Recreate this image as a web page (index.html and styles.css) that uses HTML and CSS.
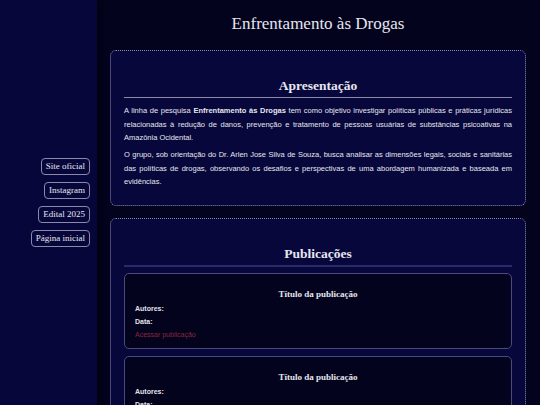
FILE: index.html
```html
<!DOCTYPE html>
<html lang="pt-BR">
<head>
<meta charset="utf-8">
<title>Enfrentamento às Drogas</title>
<link rel="stylesheet" href="styles.css">
</head>
<body>
<div class="layout">
  <nav class="sidebar">
    <a class="nav-btn" href="#">Site oficial</a>
    <a class="nav-btn" href="#">Instagram</a>
    <a class="nav-btn" href="#">Edital 2025</a>
    <a class="nav-btn" href="#">Página inicial</a>
  </nav>
  <main class="main">
    <h1 class="page-title">Enfrentamento às Drogas</h1>
    <section class="card">
      <h2 class="card-title">Apresentação</h2>
      <p class="text">A linha de pesquisa <strong>Enfrentamento às Drogas</strong> tem como objetivo investigar políticas públicas e práticas jurídicas relacionadas à redução de danos, prevenção e tratamento de pessoas usuárias de substâncias psicoativas na Amazônia Ocidental.</p>
      <p class="text">O grupo, sob orientação do Dr. Arlen Jose Silva de Souza, busca analisar as dimensões legais, sociais e sanitárias das políticas de drogas, observando os desafios e perspectivas de uma abordagem humanizada e baseada em evidências.</p>
    </section>
    <section class="card">
      <h2 class="card-title card-title-alt">Publicações</h2>
      <div class="pub">
        <h3 class="pub-title">Título da publicação</h3>
        <p class="pub-line">Autores:</p>
        <p class="pub-line">Data:</p>
        <a class="pub-link" href="#">Acessar publicação</a>
      </div>
      <div class="pub">
        <h3 class="pub-title">Título da publicação</h3>
        <p class="pub-line">Autores:</p>
        <p class="pub-line">Data:</p>
        <a class="pub-link" href="#">Acessar publicação</a>
      </div>
    </section>
  </main>
</div>
</body>
</html>
```
FILE: styles.css
```css
* { box-sizing: border-box; }
html, body { margin: 0; padding: 0; }
body {
  background: #03031e;
  color: #e2e2ea;
  font-family: "Liberation Serif", "Times New Roman", serif;
  height: 405px;
  overflow: hidden;
}
.layout {
  display: flex;
  height: 405px;
}
.sidebar {
  width: 97px;
  flex: none;
  background: #06063a;
  box-shadow: 2px 0 4px rgba(0, 0, 0, 0.55);
  display: flex;
  flex-direction: column;
  justify-content: center;
  align-items: flex-end;
  gap: 7px;
  padding: 0 7px 0 0;
  position: relative;
  z-index: 1;
}
.nav-btn {
  font-family: "Liberation Serif", serif;
  font-size: 9px;
  line-height: 15px;
  color: #e6e6ee;
  text-decoration: none;
  border: 1px solid #8a8aa8;
  border-radius: 4px;
  padding: 0 4px;
  height: 17px;
}
.main {
  flex: 1;
  padding: 0 14px 0 13px;
  overflow: hidden;
}
.page-title {
  font-weight: normal;
  font-size: 17px;
  text-align: center;
  margin: 14px 0 16px;
  line-height: 20px;
  color: #e6e6ee;
}
.card {
  background: #07073c;
  border: 1px dotted #8a8ab0;
  border-radius: 6px;
  padding: 26px 13px 13px;
  margin-bottom: 12px;
}
.card-title {
  font-size: 13.5px;
  text-align: center;
  margin: 0 0 6px;
  padding-bottom: 2px;
  line-height: 18px;
  border-bottom: 1px solid #8a8aa8;
  color: #e6e6ee;
}
.card-title-alt {
  border-bottom: 2px solid #2a2a6a;
}
.text {
  font-family: "Liberation Sans", Arial, sans-serif;
  font-size: 7.5px;
  line-height: 13.5px;
  text-align: justify;
  margin: 0 0 3.5px;
  color: #e6e6ee;
}
.text strong { font-weight: bold; }
.pub {
  background: #03031e;
  border: 1px solid #4a4a7e;
  border-radius: 5px;
  padding: 14px 10px 7px;
  margin-bottom: 7px;
}
.pub-title {
  font-size: 9px;
  text-align: center;
  margin: 0 0 2px;
  line-height: 12px;
  color: #e6e6ee;
}
.pub-line {
  font-family: "Liberation Sans", Arial, sans-serif;
  font-size: 7px;
  font-weight: bold;
  line-height: 13px;
  margin: 0;
  color: #e2e2ea;
}
.pub-link {
  display: block;
  font-family: "Liberation Sans", Arial, sans-serif;
  font-size: 7px;
  line-height: 13px;
  color: #8a283c;
  text-decoration: none;
}
```
